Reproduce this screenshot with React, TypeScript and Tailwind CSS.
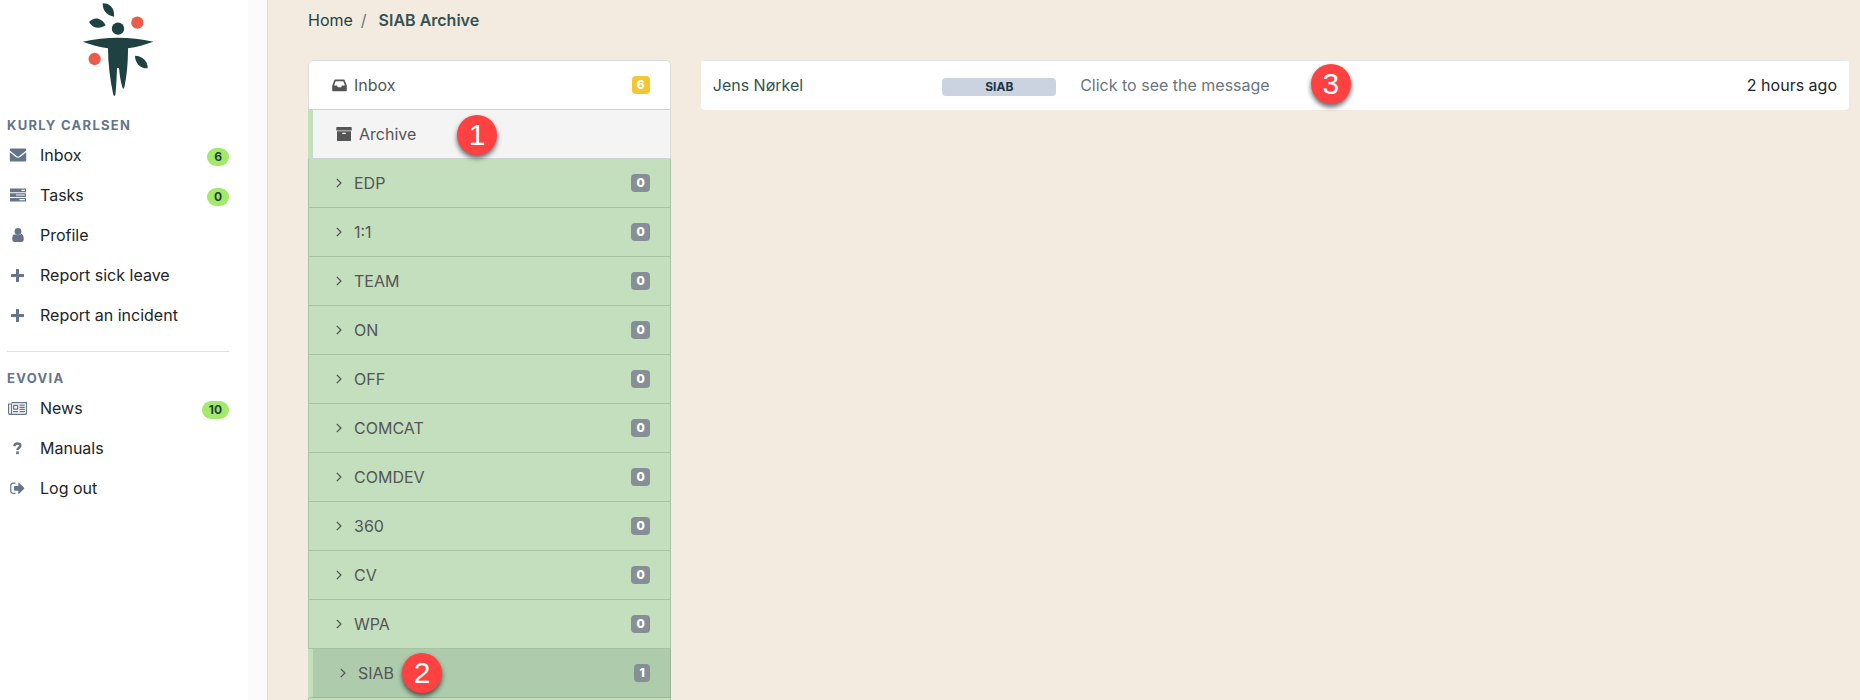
import React from 'react';

type IconProps = { className?: string };

const EnvelopeIcon: React.FC<IconProps> = ({ className }) => (
  <svg className={className} width="18" height="14" viewBox="0 0 18 14" fill="currentColor" aria-hidden="true">
    <path d="M1.6 .5h14.800a.8.8 0 0 1 .8.8v1.200L10.400 8c-.9.700-1.900.700-2.800 0L.8 2.500V1.300a.8.800 0 0 1 .8-.8z" />
    <path d="M.8 4.200l6 4.800c1.400 1.100 3 1.100 4.400 0l6-4.800v8.500a.8.800 0 0 1-.8.800H1.600a.8.800 0 0 1-.8-.8z" />
  </svg>
);

const TasksIcon: React.FC<IconProps> = ({ className }) => (
  <svg className={className} width="18" height="14" viewBox="0 0 18 14" fill="currentColor" fillRule="evenodd" aria-hidden="true">
    <path d="M1 0.500h16v3.700H1zM12.500 1.700v1.200h3.500V1.700z" />
    <path d="M1 5.200h16v3.700H1zM7 6.400v1.200h9V6.400z" />
    <path d="M1 9.900h16v3.700H1zM10.500 11.100v1.200h5.500v-1.200z" />
  </svg>
);

const UserIcon: React.FC<IconProps> = ({ className }) => (
  <svg className={className} width="12" height="14" viewBox="0 0 12 14" fill="currentColor" aria-hidden="true">
    <circle cx="6" cy="3.500" r="3.400" />
    <path d="M3 6.100C1 6.100.2 8.600.2 11.200.2 12.800 1.200 14 2.600 14h6.800c1.400 0 2.400-1.200 2.400-2.800 0-2.600-.8-5.100-2.800-5.100-.8.700-1.800 1.200-3 1.200s-2.200-.5-3-1.200z" />
  </svg>
);

const PlusIcon: React.FC<IconProps> = ({ className }) => (
  <svg className={className} width="13" height="13" viewBox="0 0 13 13" fill="currentColor" aria-hidden="true">
    <path d="M5.600 0h1.800a.6.600 0 0 1 .6.600V5h4.400a.6.600 0 0 1 .6.600v1.800a.6.600 0 0 1-.6.600H8v4.400a.6.600 0 0 1-.6.600H5.600a.6.600 0 0 1-.6-.6V8H.6a.6.600 0 0 1-.6-.6V5.600A.6.600 0 0 1 .6 5H5V.6a.6.600 0 0 1 .6-.6z" />
  </svg>
);

const NewsIcon: React.FC<IconProps> = ({ className }) => (
  <svg className={className} width="19" height="13" viewBox="0 0 19 13" fill="none" stroke="currentColor" aria-hidden="true">
    <path d="M3.500 .6h15v10.400a1.400 1.400 0 0 1-1.400 1.400H2A1.400 1.400 0 0 1 .6 11V2h2.900v9c0 .8-.6 1.400-1.400 1.400" strokeWidth="1.200" />
    <path d="M5.700 3.300h4v3.800h-4zM11.500 3.200h5.300M11.500 5.300h5.300M11.500 7.400h5.300M5.100 9.700h5.200M11.500 9.700h5.300" strokeWidth="1.200" />
  </svg>
);

const QuestionIcon: React.FC<IconProps> = ({ className }) => (
  <svg className={className} width="9" height="13" viewBox="0 0 9 13" aria-hidden="true">
    <path d="M1.300 4.100C1.700 2.500 2.800 1.600 4.400 1.600c1.700 0 2.900.9 2.900 2.200 0 2-2.800 1.900-2.800 4.300" fill="none" stroke="currentColor" strokeWidth="2.500" />
    <path d="M3.100 9.500h2.700v2.700H3.100z" fill="currentColor" />
  </svg>
);

const LogOutIcon: React.FC<IconProps> = ({ className }) => (
  <svg className={className} width="15" height="13" viewBox="0 0 15 13" aria-hidden="true">
    <path d="M5.500 1.200H3.200A2.400 2.400 0 0 0 .8 3.600v5.400a2.400 2.400 0 0 0 2.400 2.400h2.300" fill="none" stroke="currentColor" strokeWidth="1.200" />
    <path d="M8.300 1.200v2.700H4.600a.6.6 0 0 0-.6.600v3.600c0 .3.300.6.600.6h3.700v2.700c0 .5.500.7.900.3l4.900-4.900c.3-.3.300-.7 0-1L9.200.9c-.4-.4-.9-.2-.9.300z" fill="currentColor" />
  </svg>
);

const InboxIcon: React.FC<IconProps> = ({ className }) => (
  <svg className={className} width="15" height="13" viewBox="0 0 15 13" fill="currentColor" fillRule="evenodd" aria-hidden="true">
    <path d="M3.400.5h8.200c.5 0 .9.300 1.100.7l1.900 4.800c.2.400.2.700.2 1.100v4.400c0 .4-.3.700-.7.700H.9c-.4 0-.7-.3-.7-.7V7.100c0-.4 0-.7.200-1.100l1.900-4.800c.2-.4.600-.7 1.100-.7zM3.700 2.200L2 6.500h3l.9 1.800h3.200l.9-1.800h3l-1.700-4.300z" />
  </svg>
);

const ArchiveIcon: React.FC<IconProps> = ({ className }) => (
  <svg className={className} width="16" height="14" viewBox="0 0 16 14" fill="currentColor" fillRule="evenodd" aria-hidden="true">
    <path d="M.9 0h14.200c.3 0 .6.300.6.600v2.300c0 .3-.3.600-.6.600H.9a.6.600 0 0 1-.6-.6V.6C.3.300.6 0 .9 0z" />
    <path d="M1 4.300h14v9c0 .4-.3.700-.6.700H1.600a.6.6 0 0 1-.6-.6zM6.700 5.800a.6.600 0 0 0 0 1.200h2.600a.6.600 0 0 0 0-1.200z" />
  </svg>
);

const ChevronIcon: React.FC<IconProps> = ({ className }) => (
  <svg className={className} width="6" height="10" viewBox="0 0 6 10" fill="none" stroke="currentColor" strokeWidth="1.300" aria-hidden="true">
    <path d="M.8 .9L4.900 5 .8 9.100" />
  </svg>
);

const Logo = () => (
  <svg width="120" height="105" viewBox="-6 0 360 315" fill="#1f4142" role="img" aria-label="Evovia">
    <circle cx="174" cy="86" r="18.500" />
    <circle cx="232" cy="68" r="18.500" fill="#ec5b4c" />
    <circle cx="104" cy="177" r="18.500" fill="#ec5b4c" />
    <path d="M128 10C150 10 164 24 162 50C142 47 128 34 128 10z" />
    <path d="M87 66C102 50 124 52 137 76C120 88 98 86 87 66z" />
    <path d="M225 167C246 168 264 182 263 205C242 206 225 190 225 167z" />
    <path d="M68 125C104 117 138 113 174 113C210 113 244 117 280 125C256 134 230 141 204 145C204 190 200 232 193 262Q190 270 187 262C182 244 179 226 177 204H171C170 232 169 258 166 284Q163 291 160 284C150 240 144 190 144 145C118 141 92 134 68 125z" />
  </svg>
);

interface NavItem {
  label: string;
  icon: React.FC<IconProps>;
  count?: number;
}

const personalItems: NavItem[] = [
  { label: 'Inbox', icon: EnvelopeIcon, count: 6 },
  { label: 'Tasks', icon: TasksIcon, count: 0 },
  { label: 'Profile', icon: UserIcon },
  { label: 'Report sick leave', icon: PlusIcon },
  { label: 'Report an incident', icon: PlusIcon },
];

const companyItems: NavItem[] = [
  { label: 'News', icon: NewsIcon, count: 10 },
  { label: 'Manuals', icon: QuestionIcon },
  { label: 'Log out', icon: LogOutIcon },
];

const folders = [
  { label: 'EDP', count: 0 },
  { label: '1:1', count: 0 },
  { label: 'TEAM', count: 0 },
  { label: 'ON', count: 0 },
  { label: 'OFF', count: 0 },
  { label: 'COMCAT', count: 0 },
  { label: 'COMDEV', count: 0 },
  { label: '360', count: 0 },
  { label: 'CV', count: 0 },
  { label: 'WPA', count: 0 },
  { label: 'SIAB', count: 1 },
];

const NavSection: React.FC<{ title: string; items: NavItem[] }> = ({ title, items }) => (
  <section>
    <h2 className="text-[13px] leading-5 font-bold tracking-widest text-[#64748b] uppercase">{title}</h2>
    <ul>
      {items.map(({ label, icon: Icon, count }) => (
        <li key={label}>
          <a href="#" className="flex h-10 items-center text-[#212529]">
            <span className="flex w-[21px] justify-center text-[#64748b]">
              <Icon />
            </span>
            <span className="ml-3">{label}</span>
            {count !== undefined && (
              <span className="mt-[3px] ml-auto rounded-full bg-[#a3e96b] px-[7px] text-xs leading-[18px] font-bold text-[#1f4142]">
                {count}
              </span>
            )}
          </a>
        </li>
      ))}
    </ul>
  </section>
);

const Callout: React.FC<{ n: number; className: string }> = ({ n, className }) => (
  <span
    className={`absolute z-10 flex size-10 items-center justify-center rounded-full bg-[#ff4141] font-['Liberation_Sans',sans-serif] text-[30px] leading-none text-white shadow-[0_3px_5px_rgba(0,0,0,0.6)] ${className}`}
  >
    {n}
  </span>
);

const CountBadge: React.FC<{ count: number; className: string }> = ({ count, className }) => (
  <span className={`ml-auto rounded px-[5px] text-xs leading-[18px] font-extrabold text-white ${className}`}>{count}</span>
);

const App = () => {
  return (
    <div className="flex h-screen overflow-hidden bg-[#f3eae0] font-[Inter,sans-serif] text-base text-[#212529]">
      {/* Sidebar */}
      <aside className="flex w-[268px] shrink-0 border-r border-[#dcdcdc] bg-[#fbfbfb]">
        <div className="w-[248px] bg-white pr-[19px] pl-[7px]">
          <div className="mb-2.5 flex justify-center">
            <Logo />
          </div>
          <NavSection title="Kurly Carlsen" items={personalItems} />
          <hr className="my-4 border-[#dee2e6]" />
          <NavSection title="Evovia" items={companyItems} />
        </div>
      </aside>

      {/* Main content */}
      <main className="min-w-0 flex-1 pr-[11px] pl-10">
        <nav aria-label="Breadcrumb" className="flex h-[60px] pt-2 text-[#1f4142]">
          <a href="#">Home</a>
          <span className="ml-2 text-[#6c757d]">/</span>
          <span className="ml-3 font-semibold text-[#35524f]">SIAB Archive</span>
        </nav>

        <div className="grid grid-cols-4 items-start gap-[30px]">
          <ul className="overflow-hidden rounded-t-[5px] text-[#555555]">
            <li>
              <a href="#" className="flex h-[49px] items-center rounded-t-[5px] border border-b-0 border-[#dcdcdc] bg-white pr-5 pl-[23px]">
                <InboxIcon />
                <span className="ml-[7px]">Inbox</span>
                <CountBadge count={6} className="bg-[#f2c733]" />
              </a>
            </li>
            <li>
              <a href="#" className="relative flex h-[50px] items-center border-y border-r border-l-[5px] border-y-[#cfd2d4] border-r-[#dcdcdc] border-l-[#c4dfbd] bg-[#f4f4f4] pr-5 pl-[23px]">
                <ArchiveIcon />
                <span className="ml-[7px]">Archive</span>
                <Callout n={1} className="top-[5px] left-36" />
              </a>
            </li>
            {folders.map(({ label, count }) => {
              const active = label === 'SIAB';
              return (
                <li key={label}>
                  <a
                    href="#"
                    className={
                      active
                        ? 'relative flex h-[49px] items-center border-r border-b border-l-[5px] border-[#9bb596] border-l-[#c4dfbd] bg-[#aecbac] pr-5 pl-[23px]'
                        : 'flex h-[49px] items-center border-x border-b border-[#a6c3a3] bg-[#c4dfbd] pr-5 pl-[23px]'
                    }
                  >
                    <span className="flex w-[22px] pl-1">
                      <ChevronIcon />
                    </span>
                    <span>{label}</span>
                    <CountBadge count={count} className="bg-[#868e96]" />
                    {active && <Callout n={2} className="top-1 left-[89px]" />}
                  </a>
                </li>
              );
            })}
            <li className="h-[49px] border-x border-[#a6c3a3] bg-[#c4dfbd]" />
          </ul>

          <div className="relative col-span-3">
            <table className="w-full table-fixed overflow-hidden rounded-[4px] bg-white">
              <tbody>
                <tr className="h-[49px]">
                  <td className="w-1/5 border-t border-[#e5e8ec] px-3 text-[#35524f]">Jens Nørkel</td>
                  <td className="w-[12%] border-t border-[#e5e8ec] px-3 pt-[3px]">
                    <span className="block rounded bg-[#cbd3e1] text-center text-xs leading-[18px] font-bold text-[#1c3348]">
                      SIAB
                    </span>
                  </td>
                  <td className="border-t border-[#e5e8ec] px-3">
                    <a href="#" className="text-[#6c757d]">Click to see the message</a>
                  </td>
                  <td className="w-1/5 border-t border-[#e5e8ec] px-3 text-right">2 hours ago</td>
                </tr>
              </tbody>
            </table>
            <Callout n={3} className="top-1 left-[610px]" />
          </div>
        </div>
      </main>
    </div>
  );
};

export default App;
